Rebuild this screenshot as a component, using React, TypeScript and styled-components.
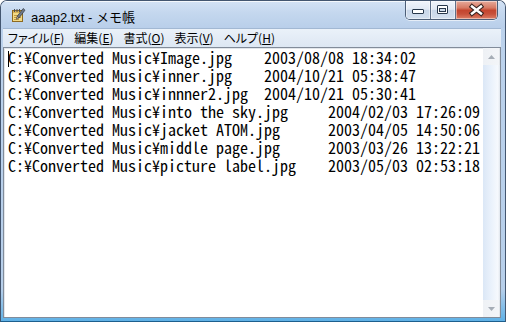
import React from "react";
import styled, { createGlobalStyle } from "styled-components";

const GlobalStyle = createGlobalStyle`
  html, body {
    margin: 0;
    padding: 0;
    background: #ffffff;
  }
  body {
    width: 506px;
    height: 322px;
    overflow: hidden;
  }
`;

const Window = styled.div`
  box-sizing: border-box;
  width: 506px;
  height: 322px;
  display: flex;
  flex-direction: column;
  border: 1px solid #435670;
  border-bottom-color: #1d5f8e;
  border-radius: 7px 7px 0 0;
  background: linear-gradient(180deg, #bcd2ec 0%, #b7cfea 90%, #5fb1e6 100%);
  overflow: hidden;
`;

const TitleBar = styled.div`
  height: 27px;
  flex: none;
  display: flex;
  align-items: flex-start;
  background: linear-gradient(180deg, #d3e2f4 0%, #c4d7ee 45%, #b9cfea 100%);
  box-shadow: inset 0 1px 0 rgba(255, 255, 255, 0.75);
`;

const AppIcon = styled.svg`
  flex: none;
  width: 16px;
  height: 16px;
  margin: 6px 0 0 9px;
`;

const TitleText = styled.div`
  margin: 8px 0 0 5px;
  font-family: "Liberation Sans", "Noto Sans CJK JP", sans-serif;
  font-size: 13px;
  line-height: 17px;
  color: #000000;
  white-space: nowrap;
`;

const CaptionGroup = styled.div`
  margin-left: auto;
  margin-right: 7px;
  display: flex;
  height: 18px;
  border: 1px solid #4c5e77;
  border-top: none;
  border-radius: 0 0 5px 5px;
  overflow: hidden;
  box-shadow: 0 1px 0 rgba(255, 255, 255, 0.6);
`;

const CaptionButton = styled.div<{ $close?: boolean }>`
  width: ${(p) => (p.$close ? "41px" : "24px")};
  height: 18px;
  display: flex;
  & + & {
    border-left: 1px solid #5f708a;
  }
  background: ${(p) =>
    p.$close
      ? "linear-gradient(180deg, #e7ab9c 0%, #d77a64 38%, #c4452e 52%, #c7503a 72%, #dd7f66 100%)"
      : "linear-gradient(180deg, #f1f5fb 0%, #e1e9f4 46%, #c9d7e9 52%, #d3dfee 100%)"};
  box-shadow: inset 0 0 0 1px rgba(255, 255, 255, 0.45);
`;

const ButtonGlyph = styled.svg`
  width: 100%;
  height: 100%;
  display: block;
`;

const Body = styled.div`
  flex: 1;
  display: flex;
  flex-direction: column;
  padding: 0 4px 3px 2px;
  min-height: 0;
`;

const MenuBar = styled.div`
  height: 18px;
  flex: none;
  display: flex;
  align-items: center;
  border-top: 1px solid #a2b8d3;
  background: linear-gradient(180deg, #eaf1f9 0%, #dde7f3 100%);
  font-family: "Noto Sans CJK JP", "Liberation Sans", sans-serif;
  font-feature-settings: "palt";
  font-size: 12px;
  color: #000000;
`;

const MenuItem = styled.span`
  padding: 0 5px;
  line-height: 18px;
  white-space: nowrap;
`;

const Mnemonic = styled.span`
  text-decoration: underline;
  text-underline-offset: 1px;
`;

const EditBox = styled.div`
  flex: 1;
  display: flex;
  min-height: 0;
  border: 1px solid #828c9a;
  background: #ffffff;
`;

const TextPane = styled.div`
  flex: 1;
  min-width: 0;
  padding: 0 0 0 4px;
  box-shadow: inset 1px 1px 0 #e2e6eb;
  font-family: "Noto Sans Mono CJK JP", "Liberation Mono", monospace;
  font-size: 16px;
  line-height: 18px;
  color: #000000;
  white-space: pre;
`;

const Line = styled.div`
  height: 18px;
`;

const Caret = styled.span`
  display: inline-block;
  width: 1px;
  height: 16px;
  margin-right: -1px;
  background: #000000;
  vertical-align: -3px;
`;

const ScrollBar = styled.div`
  width: 17px;
  flex: none;
  display: flex;
  flex-direction: column;
`;

const ArrowButton = styled.div`
  height: 17px;
  flex: none;
  display: flex;
  align-items: center;
  justify-content: center;
  background: linear-gradient(90deg, #eef1f5 0%, #f3f5f8 100%);
  border-right: 1px solid #e2e6ea;
`;

const Track = styled.div`
  flex: 1;
  background: linear-gradient(90deg, #dbe7f6 0%, #e9f1fb 45%, #f6f9fd 88%, #dfe5ec 100%);
`;

const Arrow = styled.svg`
  width: 7px;
  height: 4px;
  display: block;
`;

const rows: string[] = [
  "C:¥Converted Music¥Image.jpg    2003/08/08 18:34:02",
  "C:¥Converted Music¥inner.jpg    2004/10/21 05:38:47",
  "C:¥Converted Music¥innner2.jpg  2004/10/21 05:30:41",
  "C:¥Converted Music¥into the sky.jpg     2004/02/03 17:26:09",
  "C:¥Converted Music¥jacket ATOM.jpg      2003/04/05 14:50:06",
  "C:¥Converted Music¥middle page.jpg      2003/03/26 13:22:21",
  "C:¥Converted Music¥picture label.jpg    2003/05/03 02:53:18",
];

const menus: { label: string; key: string }[] = [
  { label: "ファイル", key: "F" },
  { label: "編集", key: "E" },
  { label: "書式", key: "O" },
  { label: "表示", key: "V" },
  { label: "ヘルプ", key: "H" },
];

function NotepadIcon() {
  return (
    <AppIcon viewBox="0 0 16 16">
      <rect x="2.5" y="3.5" width="10" height="11" fill="#f2da86" stroke="#8d6a22" />
      <rect x="3" y="4" width="9" height="2" fill="#d9b456" />
      <g stroke="#c29a3e" strokeWidth="1">
        <line x1="4" y1="8.5" x2="11" y2="8.5" />
        <line x1="4" y1="10.5" x2="11" y2="10.5" />
        <line x1="4" y1="12.5" x2="9" y2="12.5" />
      </g>
      <g fill="#4a4f58">
        <rect x="4" y="2" width="1" height="3" />
        <rect x="6.5" y="2" width="1" height="3" />
        <rect x="9" y="2" width="1" height="3" />
      </g>
      <polygon points="13.2,1.5 15,3.2 9,11 7.2,9.3" fill="#6f7a88" stroke="#2f3540" strokeWidth="0.7" />
      <polygon points="7.2,9.3 9,11 6.4,12.2" fill="#e9c9a0" stroke="#2f3540" strokeWidth="0.6" />
    </AppIcon>
  );
}

export default function App() {
  return (
    <>
      <GlobalStyle />
      <Window>
        <TitleBar>
          <NotepadIcon />
          <TitleText>aaap2.txt - メモ帳</TitleText>
          <CaptionGroup>
            <CaptionButton>
              <ButtonGlyph viewBox="0 0 24 18">
                <rect x="6.5" y="8.5" width="11" height="4" rx="0.5" fill="#ffffff" stroke="#27374b" />
              </ButtonGlyph>
            </CaptionButton>
            <CaptionButton>
              <ButtonGlyph viewBox="0 0 24 18">
                <rect x="6.5" y="4.5" width="10" height="8" rx="0.5" fill="#ffffff" stroke="#27374b" />
                <rect x="8.5" y="7.5" width="6" height="3" fill="#cfdbea" stroke="#27374b" />
              </ButtonGlyph>
            </CaptionButton>
            <CaptionButton $close>
              <ButtonGlyph viewBox="0 0 41 18">
                <g strokeLinecap="square">
                  <path d="M16 5.5 L25 12.5 M25 5.5 L16 12.5" stroke="#3a2420" strokeWidth="4.6" />
                  <path d="M16 5.5 L25 12.5 M25 5.5 L16 12.5" stroke="#ffffff" strokeWidth="2.4" />
                </g>
              </ButtonGlyph>
            </CaptionButton>
          </CaptionGroup>
        </TitleBar>
        <Body>
          <MenuBar>
            {menus.map((m) => (
              <MenuItem key={m.key}>
                {m.label}(<Mnemonic>{m.key}</Mnemonic>)
              </MenuItem>
            ))}
          </MenuBar>
          <EditBox>
            <TextPane>
              {rows.map((r, i) => (
                <Line key={i}>
                  {i === 0 && <Caret />}
                  {r}
                </Line>
              ))}
            </TextPane>
            <ScrollBar>
              <ArrowButton>
                <Arrow viewBox="0 0 7 4">
                  <polygon points="3.5,0 7,4 0,4" fill="#a6adb6" />
                </Arrow>
              </ArrowButton>
              <Track />
              <ArrowButton>
                <Arrow viewBox="0 0 7 4">
                  <polygon points="0,0 7,0 3.5,4" fill="#a6adb6" />
                </Arrow>
              </ArrowButton>
            </ScrollBar>
          </EditBox>
        </Body>
      </Window>
    </>
  );
}
